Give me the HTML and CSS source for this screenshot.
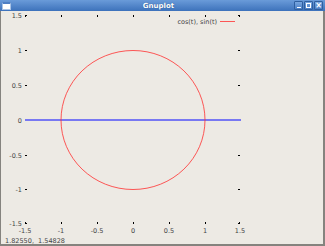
FILE: index.html
```html
<!DOCTYPE html>
<html lang="en">
<head>
    <meta charset="UTF-8">
    <title>Gnuplot</title>
    <link rel="stylesheet" href="styles.css">
</head>
<body>

<div class="window">
    <div class="titlebar">
        <span class="menuIcon"></span>
        <span class="title">Gnuplot</span>
        <div class="buttons">
            <span class="winButton"><span class="minBar"></span></span>
            <span class="winButton"><span class="maxBox"></span></span>
            <span class="winButton">&#215;</span>
        </div>
    </div>

    <!-- plot canvas, page coordinates (shifted by the frame) -->
    <svg class="plot" width="322" height="233" viewBox="1 11 322 233">
        <g class="ticks">
            <!-- left axis -->
            <path d="M25 15.5h2M25 50.5h2M25 85.5h2M25 120.5h2M25 155.5h2M25 189.5h2M25 223.5h2"/>
            <!-- right axis -->
            <path d="M238 15.5h2M238 50.5h2M238 85.5h2M238 155.5h2M238 189.5h2M238 223.5h2"/>
            <!-- top axis -->
            <path d="M25.5 15v2M61.5 15v2M97.5 15v2M133.5 15v2M169.5 15v2M205.5 15v2M239.5 15v2"/>
            <!-- bottom axis -->
            <path d="M25.5 222v2M61.5 222v2M97.5 222v2M133.5 222v2M169.5 222v2M205.5 222v2M239.5 222v2"/>
        </g>

        <g class="ylabels">
            <text x="22" y="17.5">1.5</text>
            <text x="22" y="52.5">1</text>
            <text x="22" y="87.5">0.5</text>
            <text x="22" y="122.5">0</text>
            <text x="22" y="157.5">-0.5</text>
            <text x="22" y="191.5">-1</text>
            <text x="22" y="225.5">-1.5</text>
        </g>

        <g class="xlabels">
            <text x="25" y="233">-1.5</text>
            <text x="61" y="233">-1</text>
            <text x="97" y="233">-0.5</text>
            <text x="133" y="233">0</text>
            <text x="169" y="233">0.5</text>
            <text x="205" y="233">1</text>
            <text x="240" y="233">1.5</text>
        </g>

        <line class="sinLine" x1="25" y1="120" x2="241" y2="120"/>
        <ellipse class="curve" cx="133" cy="120" rx="72" ry="69.5"/>

        <text class="legend" x="217" y="23.5">cos(t), sin(t)</text>
        <line class="curve" x1="220" y1="21.5" x2="235" y2="21.5"/>

        <text class="status" x="5" y="243">1.82550,  1.54828</text>
    </svg>
</div>

</body>
</html>
```

FILE: styles.css
```css
body {
    margin: 0;
    background-color: #edeae4;
    font-family: "DejaVu Sans", sans-serif;
}
.window {
    width: 325px;
    height: 246px;
    box-sizing: border-box;
    display: flex;
    flex-direction: column;
    background-color: #edeae4;
    border-left: 1px solid #85837e;
    border-right: 2px solid #85837e;
    border-bottom: 2px solid #85837e;
}
.titlebar {
    height: 11px;
    flex: none;
    display: flex;
    align-items: center;
    background: linear-gradient(#6a9bd9, #3d72bb);
    margin-left: -1px;
    margin-right: -2px;
}
.menuIcon {
    width: 7px;
    height: 5px;
    margin-left: 2px;
    background-color: #fff;
    border: 1px solid #a9c3e6;
    border-top: 2px solid #4e7fc4;
}
.title {
    flex: 1;
    text-align: center;
    color: #fff;
    font-size: 7px;
    font-weight: bold;
    text-shadow: 0 0 1px #23497f;
    margin-left: 12px;
}
.buttons {
    display: flex;
    gap: 1px;
    margin-right: 2px;
}
.winButton {
    width: 9px;
    height: 9px;
    box-sizing: border-box;
    border: 1px solid #2f5f9f;
    border-radius: 1px;
    background: linear-gradient(#79a6df, #4c80c6);
    color: #fff;
    font-size: 8px;
    font-weight: bold;
    line-height: 7px;
    display: flex;
    justify-content: center;
    align-items: center;
}
.minBar {
    width: 4px;
    height: 1px;
    margin-top: 3px;
    background-color: #fff;
}
.maxBox {
    width: 3px;
    height: 3px;
    border: 1px solid #fff;
}
.plot {
    display: block;
}
.ticks path {
    stroke: #000;
    stroke-width: 1;
    fill: none;
}
.ylabels text,
.xlabels text,
.legend,
.status {
    font-family: "DejaVu Sans", sans-serif;
    font-size: 6.5px;
    fill: #444;
    white-space: pre;
}
.ylabels text,
.legend {
    text-anchor: end;
}
.xlabels text {
    text-anchor: middle;
}
.sinLine {
    stroke: #7878f2;
    stroke-width: 2;
}
.curve {
    stroke: #ff3030;
    stroke-width: 0.8;
    fill: none;
}
```
